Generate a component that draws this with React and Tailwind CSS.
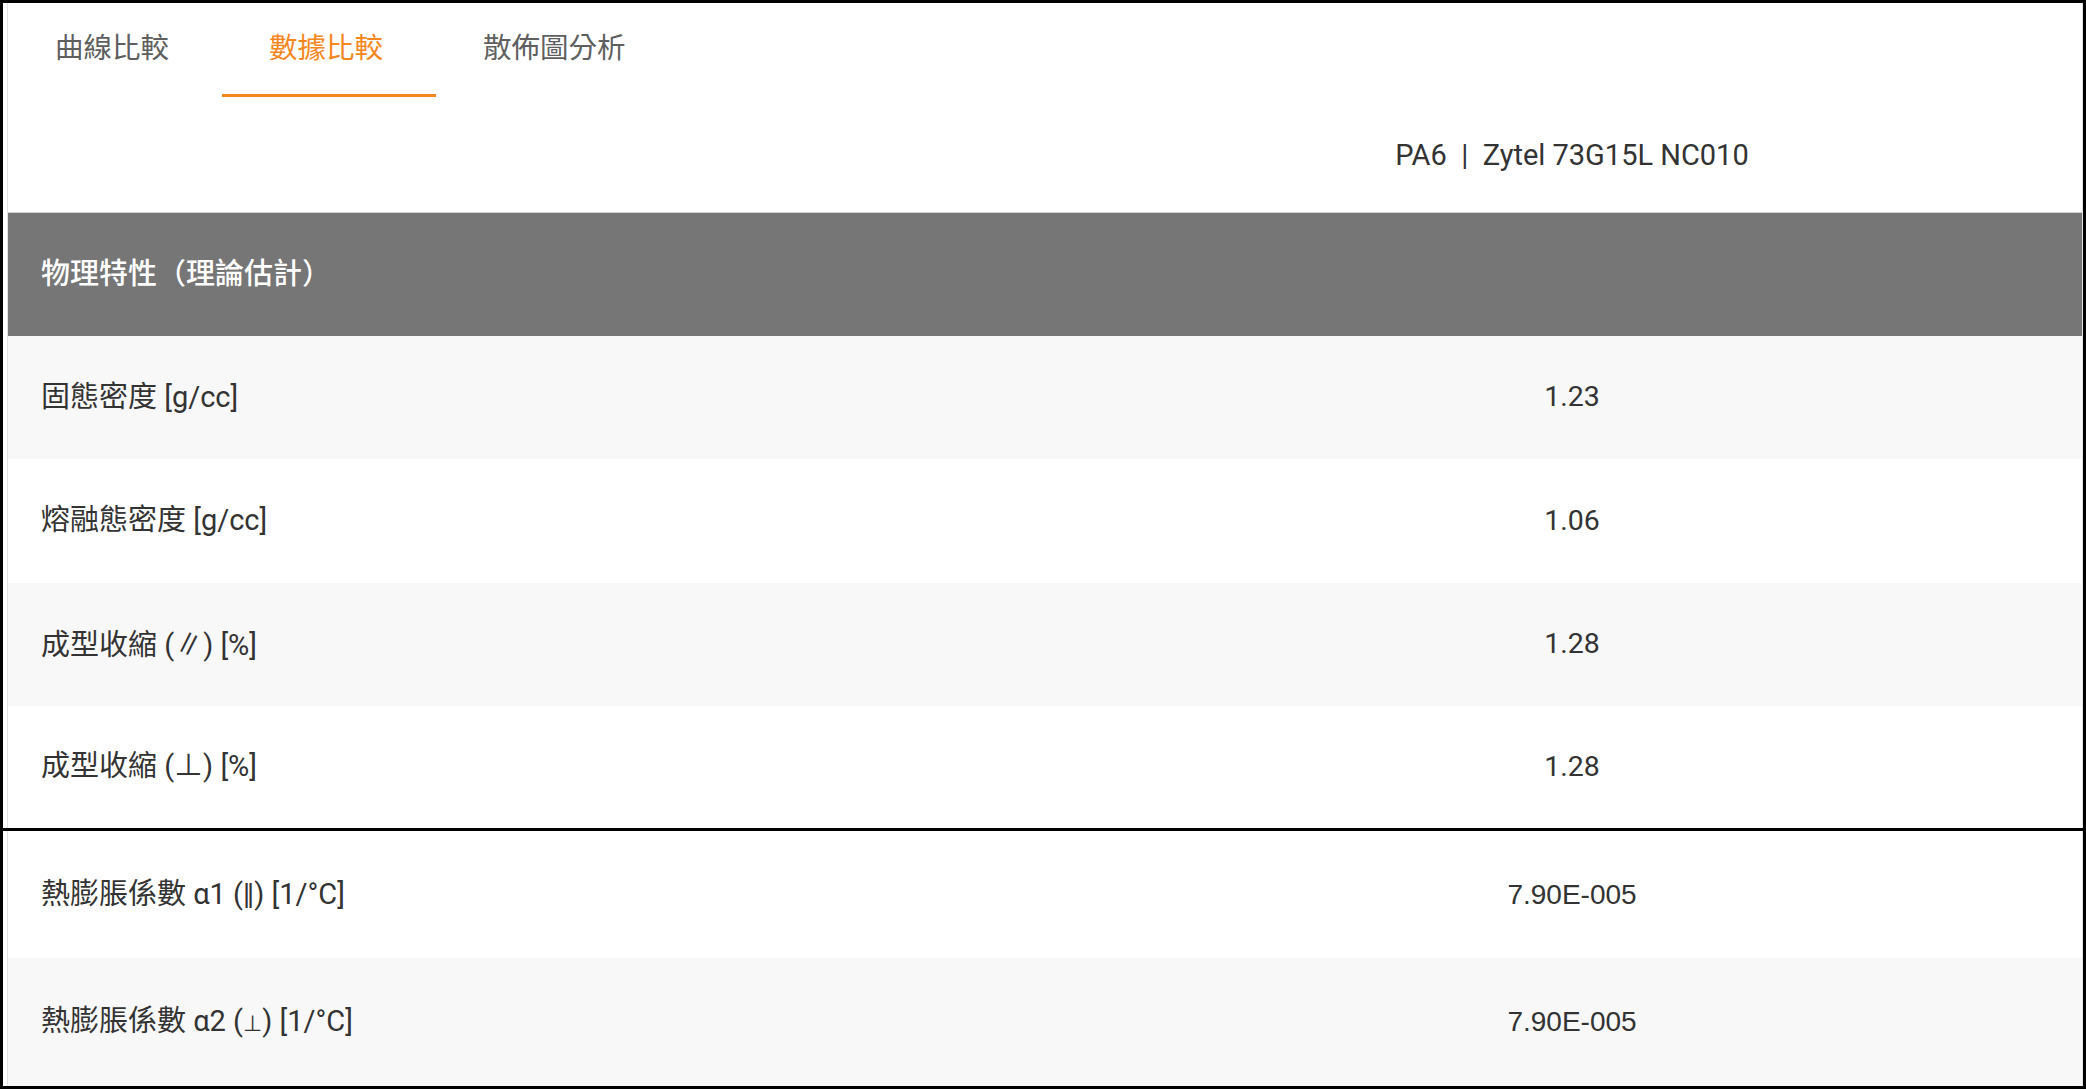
import React from "react";

const FONT = { fontFamily: 'Roboto, "Noto Sans CJK TC", "Noto Sans CJK JP", sans-serif' };

function TopRow({ label, value, gray, h }) {
  return (
    <div className={`flex items-center ${gray ? "bg-[#f8f8f8]" : "bg-white"}`} style={{ height: h }}>
      <div className="w-[1054px] pl-[33px] text-[29px] text-[#333]">{label}</div>
      <div className="flex-1 text-center text-[28.5px] text-[#333]">{value}</div>
    </div>
  );
}

function BottomRow({ label, value, gray, h }) {
  return (
    <div className={`flex items-center ${gray ? "bg-[#f8f8f8]" : "bg-white"}`} style={{ height: h }}>
      <div className="w-[1054px] pl-[33px] text-[29px] text-[#333]">{label}</div>
      <div className="flex-1 flex justify-center">
        <span
          className="inline-block text-[28px] text-[#333]"
          style={{ fontFamily: '"Liberation Sans", Arial, sans-serif' }}
        >
          {value}
        </span>
      </div>
    </div>
  );
}

export default function App() {
  return (
    <div className="w-[2086px] h-[1089px] bg-white border-[3px] border-black box-border flex flex-col overflow-hidden" style={FONT}>
      <div className="pl-[4px]">
        <div className="border-x border-[#e2e2e2]">
          {/* Tabs */}
          <div className="flex h-[94px] items-stretch">
            <div className="pl-[47px] pr-[53px] flex items-center pt-[1px] pb-[3px] text-[28.5px] text-[#5f5f5f]">曲線比較</div>
            <div className="pl-[47px] pr-[53px] flex items-center pt-[1px] text-[28.5px] text-[#f5871f] border-b-[3px] border-[#f5871f]">數據比較</div>
            <div className="pl-[47px] pr-[53px] flex items-center pt-[1px] pb-[3px] text-[28.5px] text-[#5f5f5f]">散佈圖分析</div>
          </div>
          {/* Material name */}
          <div className="flex items-center h-[115px] bg-white">
            <div className="w-[1054px]"></div>
            <div className="flex-1 text-center text-[29px] text-[#333] pt-[2px]">
              PA6&nbsp;&nbsp;|&nbsp;&nbsp;Zytel 73G15L NC010
            </div>
          </div>
          {/* Section header */}
          <div className="flex items-center h-[124px] bg-[#767676] border-t border-[#d0d0d0]">
            <div className="pl-[33px] text-[29px] text-white font-medium">物理特性（理論估計）</div>
          </div>
          <TopRow label="固態密度 [g/cc]" value="1.23" gray h={123} />
          <TopRow label="熔融態密度 [g/cc]" value="1.06" h={124} />
          <TopRow label={<span>成型收縮 (<span style={{ fontFamily: '"Noto Sans CJK JP", sans-serif' }}>∥</span>) [%]</span>} value="1.28" gray h={123} />
          <TopRow label="成型收縮 (⊥) [%]" value="1.28" h={122} />
        </div>
      </div>
      <div className="h-[3px] bg-black shrink-0"></div>
      <div className="pl-[4px] flex-1">
        <div className="border-x border-[#e2e2e2] h-full">
          <BottomRow
            label={<span>熱膨脹係數 α1 (<span className="tracking-[-3px]">||</span><span className="ml-[3px]">)</span> [1/°C]</span>}
            value="7.90E-005"
            h={127}
          />
          <BottomRow
            label={<span>熱膨脹係數 α2 (<span className="text-[22px]" style={{ fontFamily: '"DejaVu Sans", sans-serif' }}>⊥</span>) [1/°C]</span>}
            value="7.90E-005"
            gray
            h={128}
          />
        </div>
      </div>
    </div>
  );
}
